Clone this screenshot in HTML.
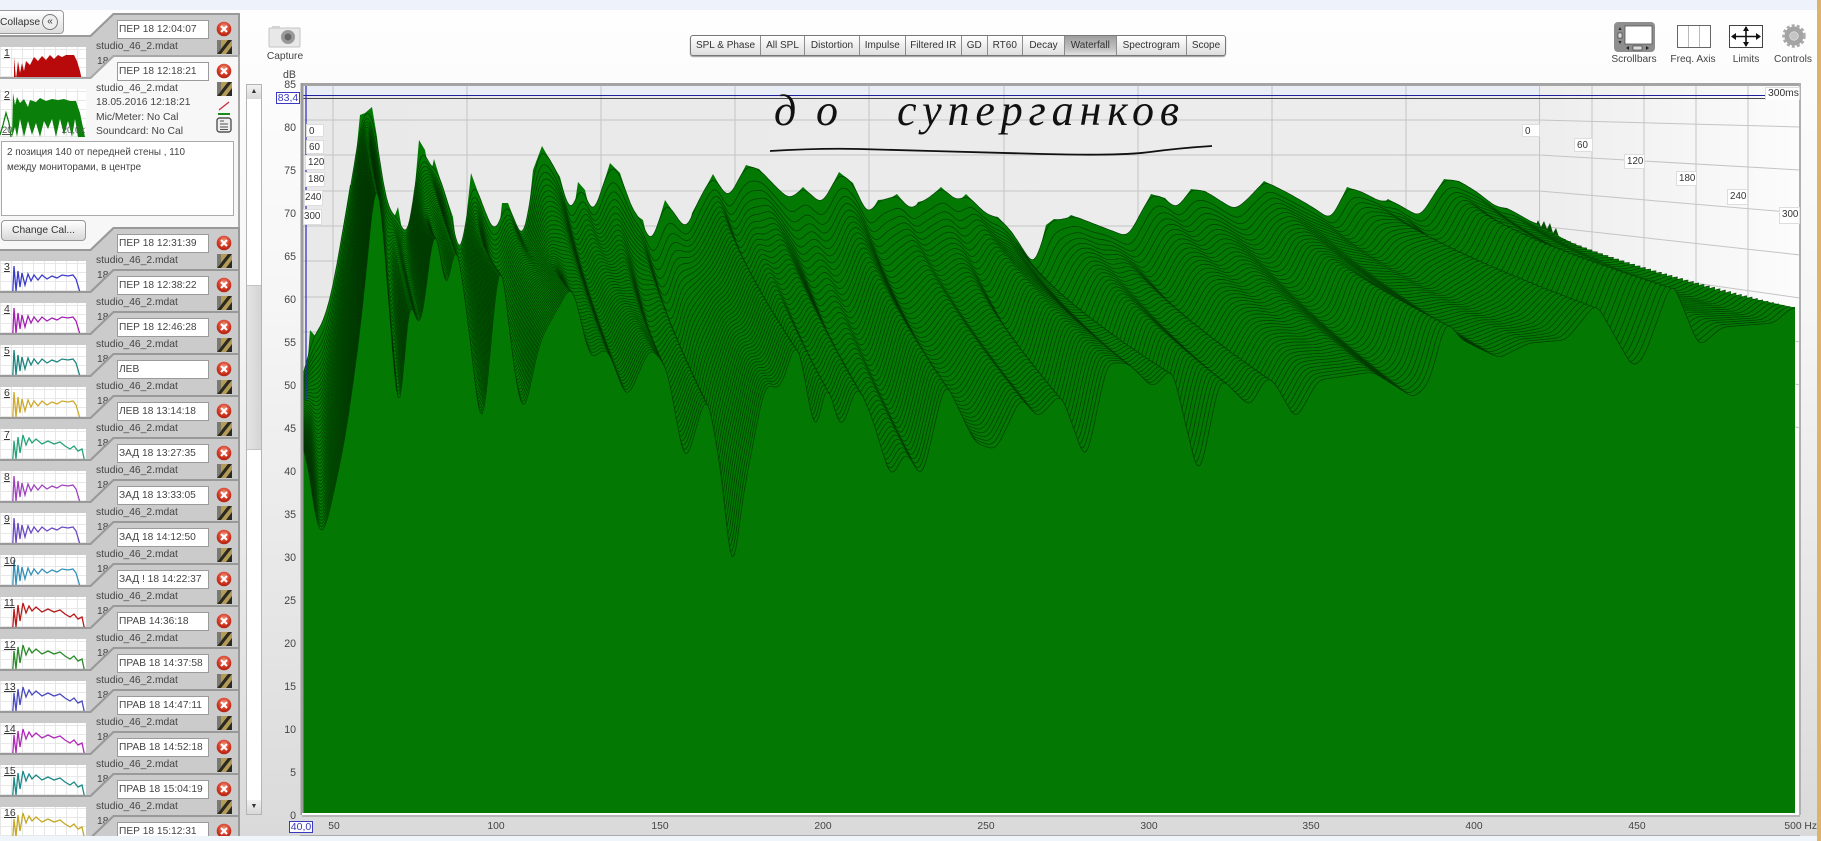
<!DOCTYPE html>
<html><head><meta charset="utf-8"><title>REW Waterfall</title>
<style>
html,body{margin:0;padding:0;width:1821px;height:841px;overflow:hidden}
body{position:relative;font-family:"Liberation Sans","Noto Sans CJK SC",sans-serif;color:#3a3a3a;background:linear-gradient(#fefefe 10px,#f6f6f6 300px,#dadada 835px)}
.a{position:absolute}
#topb{left:0;top:0;width:1817px;height:10px;background:#eef2fa}
#botb{left:0;top:836px;width:1817px;height:5px;background:#f0f4fb}
#tan{left:1817px;top:0;width:4px;height:841px;background:#dcb468}
#side{left:0;top:0;width:240px;height:836px;overflow:hidden}
.it{position:absolute;left:0;width:240px;height:110px}
.d,.l{position:absolute;left:0;top:0;width:240px;height:110px}
.d{background:#999;clip-path:polygon(113px 0,240px 0,240px 110px,0 110px,0 22px,90px 22px)}
.l{background:#cbcbcb;clip-path:polygon(114px 2px,238px 2px,238px 110px,0 110px,0 24px,91px 24px)}
.bx{position:absolute;left:117px;top:7px;height:17px;background:#fff;border:1px solid #9a9a9a;box-sizing:content-box;font-size:10.2px;line-height:18px;padding-left:1px;width:89px;color:#444;white-space:nowrap;overflow:hidden}
.nm{position:absolute;left:96px;top:27px;font-size:10.3px;line-height:14px;white-space:nowrap;color:#444}
.ei{position:absolute;left:97px;top:42px;font-size:10.3px;line-height:14px;color:#444}
.xi{position:absolute;left:216px;top:8px;width:16px;height:16px}
.di{position:absolute;left:217px;top:27px;width:15px;height:14px}
.th{position:absolute;left:0;top:34px;width:86px;height:48px;overflow:hidden;background-color:#fff;background-image:repeating-linear-gradient(90deg,#e6e6e6 0 1px,transparent 1px 11px),repeating-linear-gradient(0deg,#e8e8e8 0 1px,transparent 1px 9px)}
.th svg{position:absolute;left:0;top:0;width:86px;height:48px}
.th u{position:absolute;left:4px;top:0;font-size:10.5px;line-height:13px;color:#333}
#coll{left:-6px;top:10px;width:63px;height:22px;border:1px solid #999;border-radius:4px;background:linear-gradient(#fff,#ddd);font-size:10.3px;line-height:23px;padding-left:5px;color:#333;box-sizing:content-box}
#coll b{position:absolute;left:47px;top:3px;width:14px;height:14px;border:1px solid #777;border-radius:50%;background:#eee;font-weight:normal;font-size:10px;line-height:13px;text-align:center}
#chg{left:1px;top:220px;width:85px;height:21px;box-sizing:border-box;border:1px solid #999;border-radius:4px;background:linear-gradient(#fff,#d8d8d8);font-size:10.3px;line-height:20px;text-align:center;color:#333}
#desc{left:1px;top:141px;width:233px;height:75px;box-sizing:border-box;background:#fff;border:1px solid #aaa;font-size:9.9px;line-height:15px;padding:3px 5px;color:#444}
.tx{position:absolute;left:96px;font-size:10.3px;line-height:14px;color:#444;white-space:nowrap}
#sb{left:246px;top:84px;width:16px;height:731px;box-sizing:border-box;border:1px solid #b4b4b4;background:#fff}
#sbt{left:247px;top:285px;width:14px;height:165px;background:linear-gradient(90deg,#e4e4e4,#d4d4d4);border-top:1px solid #c4c4c4;border-bottom:1px solid #c4c4c4;box-sizing:border-box}
.sa{left:247px;width:14px;height:14px;background:linear-gradient(#f2f2f2,#d8d8d8);font-size:7px;line-height:14px;text-align:center;color:#333}
#tabs{left:690px;top:35px;width:536px;height:21px;box-sizing:border-box;display:flex;border:1px solid #777;border-radius:3px;box-shadow:0 1px 1px #999;background:linear-gradient(#fff,#dedede);overflow:hidden}
#tabs span{display:block;text-align:center;font-size:10px;line-height:20px;color:#333;border-right:1px solid #8c8c8c;box-sizing:border-box;white-space:nowrap}
#tabs span:last-child{border:0}
#tabs .on{background:linear-gradient(#9e9e9e,#c4c4c4 70%,#e0e0e0)}
.ic{position:absolute;font-size:10.2px;line-height:12px;text-align:center;color:#444;white-space:nowrap}
.yl{position:absolute;left:262px;width:34px;text-align:right;font-size:10.6px;line-height:12px;color:#444}
.xl{position:absolute;top:821px;width:40px;text-align:center;font-size:10.3px;line-height:12px;color:#444}
.tb{position:absolute;background:#fff;border:1px solid #ddd;box-sizing:border-box;font-size:9.8px;line-height:14px;color:#333;padding-left:2px;white-space:nowrap;overflow:hidden}
.vb{position:absolute;background:#fff;border:1px solid #3a3ac0;color:#3a3ac0;box-sizing:border-box;font-size:10.5px;line-height:11px;text-align:center}
</style></head><body>
<div class="a" id="topb"></div><div class="a" id="botb"></div><div class="a" id="tan"></div>

<svg width="0" height="0" style="position:absolute">
<defs>
<radialGradient id="rg" cx="50%" cy="35%" r="65%"><stop offset="0" stop-color="#f09a80"/><stop offset=".6" stop-color="#d63a26"/><stop offset="1" stop-color="#b02010"/></radialGradient>
<symbol id="xx" viewBox="0 0 16 16"><circle cx="8" cy="8" r="7.3" fill="url(#rg)"/><path d="M5 5l6 6M11 5l-6 6" stroke="#fff" stroke-width="2.2"/></symbol>
<symbol id="dd" viewBox="0 0 15 14"><rect width="15" height="14" fill="#b49c58"/><path d="M0 14L11 0h4L4 14zM9 14l6-8v8z" fill="#2a2a20"/><path d="M0 0h4v9l-4 5z" fill="#7a7a70"/></symbol>
<symbol id="c1" viewBox="0 0 86 48"><polyline fill="none" stroke-width="1.3" stroke="currentColor" points="12,48 14,5 16,30 18,10 20,26 22,12 25,24 28,13 31,20 34,14 38,19 42,14 47,18 52,15 57,17 62,14 68,15 73,14 76,18 79,28 82,40 85,48"/></symbol>
<symbol id="c2" viewBox="0 0 86 48"><polyline fill="none" stroke-width="1.3" stroke="currentColor" points="0,45 11,45 13,28 14,12 16,30 18,8 20,24 23,6 26,16 29,9 32,14 36,10 42,15 48,12 54,15 60,13 65,17 70,20 74,17 78,22 82,20 85,34"/></symbol>
</defs></svg>

<div class="a" id="side">
<div class="it" style="top:13px"><div class="d"></div><div class="l"></div>
 <div class="th"><svg viewBox="0 0 86 48"><polygon fill="#b80a0a" points="14,48 14,10 16,32 18,14 20,26 22,16 24,24 26,14 30,18 34,10 38,14 42,9 46,13 50,8 54,12 58,8 62,10 66,8 74,8 77,14 80,24 85,48"/></svg><u>1</u></div>
 <div class="bx">ПЕР 18 12:04:07</div><div class="nm">studio_46_2.mdat</div><div class="ei">18</div>
 <svg class="xi"><use href="#xx"/></svg><svg class="di"><use href="#dd"/></svg></div>

<div class="it" style="top:55px;height:190px"><div class="d" style="height:190px;background:#a8a8a8;clip-path:polygon(113px 0,240px 0,240px 190px,0 190px,0 22px,90px 22px)"></div><div class="l" style="height:190px;background:#f7f7f7;clip-path:polygon(114px 2px,238px 2px,238px 190px,0 190px,0 24px,91px 24px)"></div>
 <div class="th"><svg viewBox="0 0 86 48"><polyline fill="none" stroke="#0a800a" stroke-width="1.3" points="0,46 3,36 6,24 9,34 11,48"/><polygon fill="#0a800a" points="12,48 13,4 15,16 17,8 20,14 24,10 28,18 30,11 36,13 40,9 46,12 52,10 58,11 64,10 70,12 76,12 80,24 85,48 78,48 75,30 72,48 68,32 64,46 60,30 56,48 52,30 48,40 44,32 40,48 36,34 32,46 28,32 24,48 20,30 17,48 15,38"/></svg><u>2</u>
  <span class="a" style="left:2px;top:36px;font-size:9.5px;line-height:11px;color:#555;text-decoration:underline">20</span><span class="a" style="right:1px;top:36px;font-size:9.5px;line-height:11px;color:#555">20,0k</span></div>
 <div class="bx">ПЕР 18 12:18:21</div>
 <div class="tx" style="top:27px">studio_46_2.mdat</div>
 <div class="tx" style="top:41px">18.05.2016 12:18:21</div>
 <div class="tx" style="top:56px">Mic/Meter: No Cal</div>
 <div class="tx" style="top:70px">Soundcard: No Cal</div>
 <svg class="xi"><use href="#xx"/></svg><svg class="di"><use href="#dd"/></svg>
 <svg class="a" style="left:216px;top:46px" width="16" height="16"><path d="M3 9L13 1" stroke="#c83040" stroke-width="1.4"/><path d="M2 13h12" stroke="#1a8a1a" stroke-width="2"/></svg>
 <svg class="a" style="left:216px;top:62px" width="16" height="16"><rect x="1" y="1" width="14" height="14" rx="2.5" fill="#eee" stroke="#555" stroke-width="1.4"/><path d="M4 4h4M4 7h8M4 10h8M4 12.5h8" stroke="#555"/></svg>
</div>
<div class="a" id="desc">2 позиция 140 от передней стены , 110<br>между мониторами, в центре</div>
<div class="a" id="chg">Change Cal...</div>

<div class="it" style="top:227px"><div class="d"></div><div class="l"></div><div class="th" style="color:#3a3acc"><svg><use href="#c1"/></svg><u>3</u></div><div class="bx">ПЕР 18 12:31:39</div><div class="nm">studio_46_2.mdat</div><div class="ei">18</div><svg class="xi"><use href="#xx"/></svg><svg class="di"><use href="#dd"/></svg></div>
<div class="it" style="top:269px"><div class="d"></div><div class="l"></div><div class="th" style="color:#a41fb4"><svg><use href="#c1"/></svg><u>4</u></div><div class="bx">ПЕР 18 12:38:22</div><div class="nm">studio_46_2.mdat</div><div class="ei">18</div><svg class="xi"><use href="#xx"/></svg><svg class="di"><use href="#dd"/></svg></div>
<div class="it" style="top:311px"><div class="d"></div><div class="l"></div><div class="th" style="color:#1c8580"><svg><use href="#c1"/></svg><u>5</u></div><div class="bx">ПЕР 18 12:46:28</div><div class="nm">studio_46_2.mdat</div><div class="ei">18</div><svg class="xi"><use href="#xx"/></svg><svg class="di"><use href="#dd"/></svg></div>
<div class="it" style="top:353px"><div class="d"></div><div class="l"></div><div class="th" style="color:#cfa92a"><svg><use href="#c1"/></svg><u>6</u></div><div class="bx">ЛЕВ</div><div class="nm">studio_46_2.mdat</div><div class="ei">18</div><svg class="xi"><use href="#xx"/></svg><svg class="di"><use href="#dd"/></svg></div>
<div class="it" style="top:395px"><div class="d"></div><div class="l"></div><div class="th" style="color:#25a478"><svg><use href="#c2"/></svg><u>7</u></div><div class="bx">ЛЕВ 18 13:14:18</div><div class="nm">studio_46_2.mdat</div><div class="ei">18</div><svg class="xi"><use href="#xx"/></svg><svg class="di"><use href="#dd"/></svg></div>
<div class="it" style="top:437px"><div class="d"></div><div class="l"></div><div class="th" style="color:#a040c0"><svg><use href="#c1"/></svg><u>8</u></div><div class="bx">ЗАД 18 13:27:35</div><div class="nm">studio_46_2.mdat</div><div class="ei">18</div><svg class="xi"><use href="#xx"/></svg><svg class="di"><use href="#dd"/></svg></div>
<div class="it" style="top:479px"><div class="d"></div><div class="l"></div><div class="th" style="color:#6a48c4"><svg><use href="#c1"/></svg><u>9</u></div><div class="bx">ЗАД 18 13:33:05</div><div class="nm">studio_46_2.mdat</div><div class="ei">18</div><svg class="xi"><use href="#xx"/></svg><svg class="di"><use href="#dd"/></svg></div>
<div class="it" style="top:521px"><div class="d"></div><div class="l"></div><div class="th" style="color:#3490b8"><svg><use href="#c1"/></svg><u>10</u></div><div class="bx">ЗАД 18 14:12:50</div><div class="nm">studio_46_2.mdat</div><div class="ei">18</div><svg class="xi"><use href="#xx"/></svg><svg class="di"><use href="#dd"/></svg></div>
<div class="it" style="top:563px"><div class="d"></div><div class="l"></div><div class="th" style="color:#b81818"><svg><use href="#c2"/></svg><u>11</u></div><div class="bx">ЗАД ! 18 14:22:37</div><div class="nm">studio_46_2.mdat</div><div class="ei">18</div><svg class="xi"><use href="#xx"/></svg><svg class="di"><use href="#dd"/></svg></div>
<div class="it" style="top:605px"><div class="d"></div><div class="l"></div><div class="th" style="color:#2a8a2a"><svg><use href="#c2"/></svg><u>12</u></div><div class="bx">ПРАВ 14:36:18</div><div class="nm">studio_46_2.mdat</div><div class="ei">18</div><svg class="xi"><use href="#xx"/></svg><svg class="di"><use href="#dd"/></svg></div>
<div class="it" style="top:647px"><div class="d"></div><div class="l"></div><div class="th" style="color:#4a4ac0"><svg><use href="#c2"/></svg><u>13</u></div><div class="bx">ПРАВ 18 14:37:58</div><div class="nm">studio_46_2.mdat</div><div class="ei">18</div><svg class="xi"><use href="#xx"/></svg><svg class="di"><use href="#dd"/></svg></div>
<div class="it" style="top:689px"><div class="d"></div><div class="l"></div><div class="th" style="color:#b028b8"><svg><use href="#c2"/></svg><u>14</u></div><div class="bx">ПРАВ 18 14:47:11</div><div class="nm">studio_46_2.mdat</div><div class="ei">18</div><svg class="xi"><use href="#xx"/></svg><svg class="di"><use href="#dd"/></svg></div>
<div class="it" style="top:731px"><div class="d"></div><div class="l"></div><div class="th" style="color:#1c8a88"><svg><use href="#c2"/></svg><u>15</u></div><div class="bx">ПРАВ 18 14:52:18</div><div class="nm">studio_46_2.mdat</div><div class="ei">18</div><svg class="xi"><use href="#xx"/></svg><svg class="di"><use href="#dd"/></svg></div>
<div class="it" style="top:773px;height:63px"><div class="d" style="height:63px"></div><div class="l" style="height:63px"></div><div class="th" style="color:#c4a824;height:29px"><svg viewBox="0 0 86 29" style="height:29px"><use href="#c2" width="86" height="48"/></svg><u>16</u></div><div class="bx">ПРАВ 18 15:04:19</div><div class="nm">studio_46_2.mdat</div><div class="ei">18</div><svg class="xi"><use href="#xx"/></svg><svg class="di"><use href="#dd"/></svg></div>
<div class="it" style="top:815px;height:21px"><div class="d" style="height:21px"></div><div class="l" style="height:21px"></div><div class="bx" style="height:14px;line-height:18px">ПЕР 18 15:12:31</div><svg class="xi" style="height:13px"><use href="#xx" width="16" height="16"/></svg></div>
<div class="a" id="coll">Collapse<b>«</b></div>
</div>

<div class="a" id="sb"></div><div class="a" id="sbt"></div>
<div class="a sa" style="top:85px">▲</div><div class="a sa" style="top:800px">▼</div>

<div class="a" id="tabs"><span style="width:70px">SPL &amp; Phase</span><span style="width:44px">All SPL</span><span style="width:55px">Distortion</span><span style="width:45.5px">Impulse</span><span style="width:56.5px">Filtered IR</span><span style="width:25.5px">GD</span><span style="width:35.5px">RT60</span><span style="width:42px">Decay</span><span style="width:51.5px" class="on">Waterfall</span><span style="width:70.5px">Spectrogram</span><span style="width:38px">Scope</span></div>

<svg class="a" style="left:0;top:0" width="1821" height="841" id="plot">
<defs>
<linearGradient id="wall" gradientUnits="userSpaceOnUse" x1="302" y1="0" x2="1800" y2="0"><stop offset="0" stop-color="#e9e9e9"/><stop offset=".825" stop-color="#ededed"/><stop offset="1" stop-color="#fcfcfc"/></linearGradient>
<clipPath id="pc"><rect x="303" y="85" width="1495" height="729"/></clipPath>
</defs>
<rect x="302" y="83" width="1498" height="732" fill="url(#wall)"/>
<rect x="303" y="85" width="1236" height="11" fill="#e8edf6"/>
<g stroke="#c4c4c4" stroke-width="1" fill="none">
<path d="M333 85V815M467 85V815M601 85V815M735 85V815M869 85V815M1004 85V815M1138 85V815M1272 85V815M1406 85V815M1539.5 85V815M1592 85V815M1644 85V815M1696 85V815M1748 85V815"/>
<path d="M303 120H1539L1800 127M303 155H1539L1800 170M303 191H1539L1800 213M303 226H1539L1800 255M303 261H1539L1800 298M303 297H1539L1800 342M303 332H1539L1800 385M303 367H1539L1800 428"/>
</g>
<g id="wf" clip-path="url(#pc)">
<polygon fill="#054f05" points="1536,225 1538,220 1541,227 1544,221 1547,229 1550,223 1553,233 1556,228 1559,237 1559,245 1536,245"/>
<polygon id="T" fill="#037803" points="303,400 307,370 310,330 317,338 322,322 328,310 338,260 350,185 353,185 360,115 365,113 372,107 377,137 382,182 392,223 398,207 405,247 412,220 419,140 425,150 430,177 434,159 442,185 453,217 460,277 471,173 487,217 498,240 502,203 508,203 525,247 533,170 542,146 550,160 560,177 572,223 578,182 585,190 592,220 610,163 620,173 633,213 643,220 650,250 665,200 688,233 692,213 713,174 728,200 746,165 759,169 776,187 790,200 803,187 822,205 839,172 853,183 868,217 878,200 889,199 897,194 912,212 918,202 927,200 941,187 958,202 966,194 987,215 998,217 1012,232 1035,268 1046,225 1054,219 1065,220 1071,215 1128,237 1151,194 1165,198 1176,210 1191,189 1205,191 1235,210 1250,197 1264,181 1288,193 1314,208 1331,220 1347,187 1362,192 1383,203 1388,199 1399,205 1420,217 1444,179 1459,181 1477,192 1496,207 1507,208 1539,226 1592,253 1610,260 1670,277 1699,287 1792,307 1795,307 1795,813 303,813"/>
<polyline id="B" fill="none" stroke="none" points="303,430 310,480 317,530 323,538 330,510 345,440 360,333 370,233 377,157 390,317 400,447 408,283 420,340 435,213 447,308 455,227 470,337 482,444 500,243 513,363 523,420 540,340 572,283 590,360 607,347 627,400 650,347 667,367 685,467 707,390 723,483 732,587 742,500 765,383 780,390 797,337 816,440 826,377 841,433 857,383 872,417 891,480 906,450 922,480 945,380 975,443 996,450 1021,397 1038,418 1061,393 1086,463 1107,363 1128,363 1153,388 1172,367 1199,480 1220,377 1250,407 1266,377 1273,380 1296,420 1318,380 1373,372 1414,398 1429,383 1446,320 1462,340 1499,358 1529,343 1566,340 1596,303 1633,368 1644,357 1672,280 1699,347 1722,327 1774,323 1792,307 1795,307"/>
</g>
<path d="M303 95.5H1800" stroke="#20209c" stroke-width="1"/>
<path d="M303 98.5H1800" stroke="#4a4a4a" stroke-width="1"/>
<path d="M306 85V400" stroke="#2828c0" stroke-width="1.2"/>
<path d="M302 84.5H1800" stroke="#a4a4a4" stroke-width="3"/>
<path d="M302 83V815" stroke="#9c9c9c" stroke-width="3"/>
<path d="M1800 83V815" stroke="#b0b0b0" stroke-width="2"/>
<path d="M302 814H1799" stroke="#fff" stroke-width="2"/>
<path d="M302 816H1800" stroke="#aaa" stroke-width="1.5"/>
<path d="M300 835.5H1800" stroke="#aaa" stroke-width="1"/>
<g fill="#111" font-family="'Liberation Serif','Noto Serif CJK SC',serif" font-style="italic" font-size="44">
<text x="774" y="125" textLength="64" lengthAdjust="spacing">до</text>
<text x="897" y="125" textLength="282" lengthAdjust="spacing">суперганков</text>
</g>
<path d="M770 151Q820 148 859 149T932 151T1043 154T1150 152T1212 146" fill="none" stroke="#111" stroke-width="1.8"/>
<!-- icons -->
<rect x="269" y="28" width="31" height="19" rx="1" fill="#e8e8e8" stroke="#c4c4c4"/><rect x="272" y="26" width="8" height="3" fill="#d4d4d4"/><circle cx="288" cy="37" r="7" fill="#999"/><circle cx="288" cy="37" r="3.5" fill="#666"/>
<rect x="1614" y="22" width="41" height="30" rx="4" fill="#8e8e8e"/><rect x="1625" y="26" width="27" height="18" fill="#fff" stroke="#555" stroke-width=".8"/><rect x="1618" y="33" width="4" height="5" fill="#ddd" stroke="#333" stroke-width=".6"/><rect x="1633" y="46" width="9" height="4" fill="#ddd" stroke="#333" stroke-width=".6"/><path d="M1620 27l-1.5 3h3zM1620 44l-1.5-3h3zM1626 48l3-2v4zM1649 48l-3-2v4z" fill="#222"/>
<rect x="1677.5" y="25.5" width="33" height="22" fill="#fff" stroke="#666"/><path d="M1688.5 26v21M1699.5 26v21" stroke="#bbb"/>
<rect x="1729.5" y="25.5" width="33" height="22" fill="#fff" stroke="#444"/><path d="M1732 36.5h28M1746 27v19" stroke="#111" stroke-width="1.6"/><path d="M1731 36.5l5-3.5v7zM1761 36.5l-5-3.5v7zM1746 26l-3 5h6zM1746 47l-3-5h6z" fill="#111"/>
<circle cx="1794" cy="36" r="4" fill="#c4c4c4"/><circle cx="1794" cy="36" r="7" fill="none" stroke="#a4a4a4" stroke-width="5"/><circle cx="1794" cy="36" r="10.5" fill="none" stroke="#aaa" stroke-width="2.5" stroke-dasharray="3 2.2"/>
</svg>

<div class="ic" style="left:262px;top:51px;width:46px">Capture</div>
<div class="ic" style="left:1604px;top:54px;width:60px">Scrollbars</div>
<div class="ic" style="left:1664px;top:54px;width:58px">Freq. Axis</div>
<div class="ic" style="left:1722px;top:54px;width:48px">Limits</div>
<div class="ic" style="left:1770px;top:54px;width:46px">Controls</div>

<div class="yl" style="top:69px">dB</div>
<div class="yl" style="top:79px">85</div><div class="yl" style="top:122px">80</div><div class="yl" style="top:165px">75</div><div class="yl" style="top:208px">70</div><div class="yl" style="top:251px">65</div><div class="yl" style="top:294px">60</div><div class="yl" style="top:337px">55</div><div class="yl" style="top:380px">50</div><div class="yl" style="top:423px">45</div><div class="yl" style="top:466px">40</div><div class="yl" style="top:509px">35</div><div class="yl" style="top:552px">30</div><div class="yl" style="top:595px">25</div><div class="yl" style="top:638px">20</div><div class="yl" style="top:681px">15</div><div class="yl" style="top:724px">10</div><div class="yl" style="top:767px">5</div><div class="yl" style="top:810px">0</div>
<div class="vb" style="left:276px;top:92px;width:24px;height:12px">83,4</div>
<div class="vb" style="left:289px;top:821px;width:24px;height:12px">40,0</div>

<div class="xl" style="left:314px">50</div><div class="xl" style="left:476px">100</div><div class="xl" style="left:640px">150</div><div class="xl" style="left:803px">200</div><div class="xl" style="left:966px">250</div><div class="xl" style="left:1129px">300</div><div class="xl" style="left:1291px">350</div><div class="xl" style="left:1454px">400</div><div class="xl" style="left:1617px">450</div>
<div class="xl" style="left:1776px;width:41px;text-align:right">500 Hz</div>

<div class="tb" style="left:306px;top:124px;width:18px;height:13px">0</div>
<div class="tb" style="left:306px;top:140px;width:18px;height:14px">60</div>
<div class="tb" style="left:305px;top:155px;width:20px;height:15px">120</div>
<div class="tb" style="left:305px;top:172px;width:20px;height:15px">180</div>
<div class="tb" style="left:304px;top:190px;width:19px;height:16px;padding-left:0">240</div>
<div class="tb" style="left:303px;top:209px;width:19px;height:16px;padding-left:0">300</div>
<div class="tb" style="left:1522px;top:124px;width:18px;height:13px">0</div>
<div class="tb" style="left:1574px;top:138px;width:19px;height:14px">60</div>
<div class="tb" style="left:1624px;top:154px;width:21px;height:15px">120</div>
<div class="tb" style="left:1676px;top:171px;width:21px;height:15px">180</div>
<div class="tb" style="left:1727px;top:189px;width:21px;height:16px">240</div>
<div class="tb" style="left:1779px;top:207px;width:21px;height:17px">300</div>
<div class="tb" style="left:1765px;top:87px;width:35px;height:13px;line-height:12px;font-size:10.3px;border-bottom:0">300ms</div>

<script>
(function(){
var NS='http://www.w3.org/2000/svg';
function parse(s){return s.trim().split(/\s+/).map(function(p){var a=p.split(',');return [+a[0],+a[1]];});}
var tEl=document.getElementById('T'),bEl=document.getElementById('B'),wf=document.getElementById('wf');
var T=parse(tEl.getAttribute('points')).slice(0,-2),B=parse(bEl.getAttribute('points'));
function at(P,x){for(var i=1;i<P.length;i++){if(x<=P[i][0]){var a=P[i-1],b=P[i];var u=(x-a[0])/((b[0]-a[0])||1);return a[1]+(b[1]-a[1])*u;}}return P[P.length-1][1];}
function smooth(arr,r){return arr.map(function(_,i){var s=0,n=0;for(var j=-r;j<=r;j++){var k=i+j;if(k>=0&&k<arr.length){var w=r+1-Math.abs(j);s+=arr[k]*w;n+=w;}}return s/n;});}
var M=800,F=[];for(var i=0;i<=M;i++)F.push(i/M);
var back=smooth(F.map(function(f){return at(T,303+f*1236);}),6);
var front=smooth(F.map(function(f){return at(B,303+f*1492);}),4);
var N=48,frag=document.createDocumentFragment();
for(var k=0;k<=N;k++){
 var tau=k/N,te=Math.pow(tau,.75),w=1236+256*tau,pts=[],s='';
 for(var i=0;i<=M;i++){
  var x=303+F[i]*w,y=back[i]*(1-te)+front[i]*te;
  var xs=x.toFixed(1),ys=y.toFixed(1);
  pts.push(xs+','+ys);s+=(i?'L':'M')+xs+' '+ys;
 }
 var xe=(303+w).toFixed(1);
 var pg=document.createElementNS(NS,'polygon');
 pg.setAttribute('points',pts.join(' ')+' '+xe+',813 303,813');pg.setAttribute('fill','#037803');frag.appendChild(pg);
 var p=document.createElementNS(NS,'path');
 p.setAttribute('d',s);p.setAttribute('fill','none');p.setAttribute('stroke','#012e01');p.setAttribute('stroke-width','.7');p.setAttribute('stroke-opacity','.8');frag.appendChild(p);
}
wf.appendChild(frag);
})();
</script>
</body></html>
